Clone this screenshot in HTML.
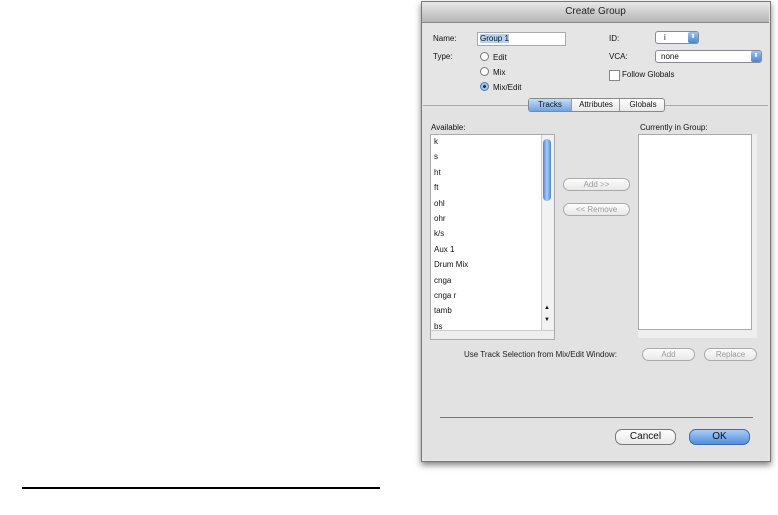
<!DOCTYPE html><html><head><style>
body{margin:0;width:778px;height:515px;background:#fff;position:relative;font-family:"Liberation Sans",sans-serif;font-size:8px;color:#111;overflow:hidden}
.a{position:absolute}
.btn{position:absolute;border:1px solid #aaa;border-radius:7px;background:linear-gradient(#fdfdfd,#e8e8e8);text-align:center;color:#999;box-sizing:border-box}
.rad{position:absolute;width:9px;height:9px;border:1px solid #777;border-radius:50%;background:#fff;box-sizing:border-box}
</style></head><body>
<div class="a" style="left:421px;top:1px;width:348px;height:459px;background:#e5e5e5;border:1px solid #777;box-shadow:0 3px 6px rgba(0,0,0,.5)"></div>
<div class="a" style="left:422px;top:2px;width:347px;height:20px;background:linear-gradient(#e8e8e8,#b5b5b5);border-bottom:1px solid #888;text-align:center;font-size:10px;line-height:20px;color:#222">Create Group</div>
<div class="a" style="left:433px;top:34px">Name:</div>
<div class="a" style="left:477px;top:32px;width:89px;height:14px;background:#fff;border:1px solid #aaa;box-sizing:border-box"><span style="background:#b5d3f3;margin-left:2px;line-height:12px">Group 1</span></div>
<div class="a" style="left:433px;top:52px">Type:</div>
<div class="rad" style="left:480px;top:52px"></div><div class="a" style="left:493px;top:53px">Edit</div>
<div class="rad" style="left:480px;top:67px"></div><div class="a" style="left:493px;top:68px">Mix</div>
<div class="rad" style="left:480px;top:82px;background:radial-gradient(#222 25%,#9bc4ef 35%);border-color:#4a7fc0"></div><div class="a" style="left:493px;top:83px">Mix/Edit</div>
<div class="a" style="left:609px;top:34px">ID:</div>
<div class="a" style="left:655px;top:31px;width:44px;height:13px;border:1px solid #889;border-radius:3px;background:#fff;box-sizing:border-box;padding-left:8px;line-height:11px">i<span class="a" style="right:0;top:0;width:10px;height:11px;background:linear-gradient(#9cc4f0,#4a86d0);border-radius:2px;font-size:6px;color:#fff;text-align:center">⬍</span></div>
<div class="a" style="left:609px;top:52px">VCA:</div>
<div class="a" style="left:655px;top:50px;width:107px;height:13px;border:1px solid #889;border-radius:3px;background:#fff;box-sizing:border-box;padding-left:5px;line-height:11px">none<span class="a" style="right:0;top:0;width:10px;height:11px;background:linear-gradient(#9cc4f0,#4a86d0);border-radius:2px;font-size:6px;color:#fff;text-align:center">⬍</span></div>
<div class="a" style="left:609px;top:70px;width:9px;height:9px;border:1px solid #888;background:#fff"></div><div class="a" style="left:622px;top:70px">Follow Globals</div>
<div class="a" style="left:423px;top:105px;width:345px;height:354px;background:#e2e2e2;border-top:1px solid #aaa"></div>
<div class="a" style="left:528px;top:98px;width:137px;height:14px;border:1px solid #888;border-radius:3px;background:linear-gradient(#fff,#e8e8e8);box-sizing:border-box;line-height:12px">
<span class="a" style="left:0;top:0;width:42px;height:12px;background:linear-gradient(#c5def8,#6fa4e2);text-align:center">Tracks</span>
<span class="a" style="left:42px;width:48px;text-align:center;border-left:1px solid #999">Attributes</span>
<span class="a" style="left:90px;width:46px;text-align:center;border-left:1px solid #999">Globals</span></div>
<div class="a" style="left:431px;top:123px">Available:</div>
<div class="a" style="left:640px;top:123px">Currently in Group:</div>
<div class="a" style="left:430px;top:134px;width:125px;height:206px;background:#fff;border:1px solid #aaa;box-sizing:border-box;overflow:hidden">
<div style="padding-left:3px;line-height:15.4px;margin-top:-1px">k<br>s<br>ht<br>ft<br>ohl<br>ohr<br>k/s<br>Aux 1<br>Drum Mix<br>cnga<br>cnga r<br>tamb<br>bs</div>
<div class="a" style="left:0;top:195px;width:124px;height:10px;background:#eee;border-top:1px solid #ccc"></div>
<div class="a" style="left:110px;top:0;width:13px;height:195px;background:#f2f2f2;border-left:1px solid #ccc"></div>
<div class="a" style="left:112px;top:4px;width:8px;height:62px;border-radius:5px;background:linear-gradient(90deg,#4b86d4,#a9cdf6,#4b86d4)"></div>
<div class="a" style="left:113px;top:170px;font-size:6px">▲</div><div class="a" style="left:113px;top:182px;font-size:6px">▼</div>
</div>
<div class="a" style="left:638px;top:134px;width:119px;height:204px;background:#eee"></div>
<div class="a" style="left:638px;top:134px;width:114px;height:196px;background:#fff;border:1px solid #aaa;box-sizing:border-box"></div>
<div class="btn" style="left:563px;top:178px;width:67px;height:13px;line-height:11px">Add &gt;&gt;</div>
<div class="btn" style="left:563px;top:203px;width:67px;height:13px;line-height:11px">&lt;&lt; Remove</div>
<div class="a" style="left:464px;top:350px;color:#222">Use Track Selection from Mix/Edit Window:</div>
<div class="btn" style="left:642px;top:348px;width:53px;height:13px;line-height:11px">Add</div>
<div class="btn" style="left:704px;top:348px;width:53px;height:13px;line-height:11px">Replace</div>
<div class="a" style="left:440px;top:417px;width:313px;height:1px;background:#777"></div>
<div class="btn" style="left:615px;top:429px;width:61px;height:16px;line-height:14px;color:#111;font-size:10px;border-color:#777">Cancel</div>
<div class="btn" style="left:689px;top:429px;width:61px;height:16px;line-height:14px;color:#111;font-size:10px;border-color:#3b6bb0;background:linear-gradient(#a9cdf6,#4f8fdc)">OK</div>
<div class="a" style="left:22px;top:487px;width:358px;height:2px;background:#000"></div>
</body></html>
